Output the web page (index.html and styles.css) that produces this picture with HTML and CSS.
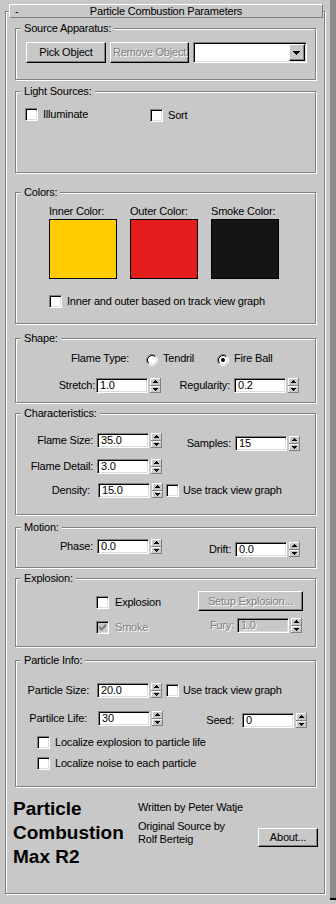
FILE: index.html
```html
<!DOCTYPE html>
<html>
<head>
<meta charset="utf-8">
<title>Particle Combustion Parameters</title>
<link rel="stylesheet" href="styles.css">
</head>
<body>
<div class="screen">
  <div class="main">
    <div class="titlebar">
      <span class="tb-toggle">-</span>
      <span class="tb-title">Particle Combustion Parameters</span>
      <span></span>
    </div>
    <div class="rollout">

      <section class="group g-source">
        <div class="legend">Source Apparatus:</div>
        <div class="row r-source">
          <div class="btn btn-pick">Pick Object</div>
          <div class="btn btn-remove disabled">Remove Object</div>
          <div class="combo">
            <div class="combo-arrow">
              <svg width="7" height="4" viewBox="0 0 7 4" shape-rendering="crispEdges"><rect x="0" y="0" width="7" height="1"/><rect x="1" y="1" width="5" height="1"/><rect x="2" y="2" width="3" height="1"/><rect x="3" y="3" width="1" height="1"/></svg>
            </div>
          </div>
        </div>
      </section>

      <section class="group g-light">
        <div class="legend">Light Sources:</div>
        <div class="row r-light">
          <label class="check"><span class="box"></span><span>Illuminate</span></label>
          <label class="check check-sort"><span class="box"></span><span>Sort</span></label>
        </div>
      </section>

      <section class="group g-colors">
        <div class="legend">Colors:</div>
        <div class="colors">
          <div class="color-col"><div class="color-name">Inner Color:</div><div class="swatch sw-inner"></div></div>
          <div class="color-col"><div class="color-name">Outer Color:</div><div class="swatch sw-outer"></div></div>
          <div class="color-col"><div class="color-name">Smoke Color:</div><div class="swatch sw-smoke"></div></div>
        </div>
        <div class="row r-colors-check">
          <label class="check"><span class="box"></span><span>Inner and outer based on track view graph</span></label>
        </div>
      </section>

      <section class="group g-shape">
        <div class="legend">Shape:</div>
        <div class="row r-flame">
          <span class="flame-label">Flame Type:</span>
          <label class="radio-item">
            <svg class="radio" width="12" height="12" viewBox="0 0 12 12"><circle cx="6" cy="6" r="4.5" fill="#fff"/><path d="M2.11 9.89A5.5 5.5 0 0 1 9.89 2.11" fill="none" stroke="#808080"/><path d="M9.89 2.11A5.5 5.5 0 0 1 2.11 9.89" fill="none" stroke="#fff"/><path d="M2.82 9.18A4.5 4.5 0 0 1 9.18 2.82" fill="none" stroke="#000"/><path d="M9.18 2.82A4.5 4.5 0 0 1 2.82 9.18" fill="none" stroke="#dcdcdc"/></svg>
            <span>Tendril</span>
          </label>
          <label class="radio-item">
            <svg class="radio" width="12" height="12" viewBox="0 0 12 12"><circle cx="6" cy="6" r="4.5" fill="#fff"/><path d="M2.11 9.89A5.5 5.5 0 0 1 9.89 2.11" fill="none" stroke="#808080"/><path d="M9.89 2.11A5.5 5.5 0 0 1 2.11 9.89" fill="none" stroke="#fff"/><path d="M2.82 9.18A4.5 4.5 0 0 1 9.18 2.82" fill="none" stroke="#000"/><path d="M9.18 2.82A4.5 4.5 0 0 1 2.82 9.18" fill="none" stroke="#dcdcdc"/><circle cx="6" cy="6" r="2" fill="#000"/></svg>
            <span>Fire Ball</span>
          </label>
        </div>
        <div class="row r-stretch">
          <div class="field">
            <span class="lbl lbl-l lbl-stretch">Stretch:</span>
            <span class="edit">1.0</span>
            <svg class="spin" width="11" height="15" viewBox="0 0 11 15" shape-rendering="crispEdges"><rect width="11" height="15" fill="#808080"/><rect width="10" height="7" fill="#fff"/><rect x="1" y="1" width="9" height="6" fill="#c8c8c8"/><rect y="8" width="10" height="6" fill="#fff"/><rect x="1" y="9" width="9" height="5" fill="#c8c8c8"/><rect x="5" y="2" width="1" height="1"/><rect x="4" y="3" width="3" height="1"/><rect x="3" y="4" width="5" height="1"/><rect x="3" y="10" width="5" height="1"/><rect x="4" y="11" width="3" height="1"/><rect x="5" y="12" width="1" height="1"/></svg>
          </div>
          <div class="field">
            <span class="lbl lbl-r">Regularity:</span>
            <span class="edit">0.2</span>
            <svg class="spin" width="11" height="15" viewBox="0 0 11 15" shape-rendering="crispEdges"><rect width="11" height="15" fill="#808080"/><rect width="10" height="7" fill="#fff"/><rect x="1" y="1" width="9" height="6" fill="#c8c8c8"/><rect y="8" width="10" height="6" fill="#fff"/><rect x="1" y="9" width="9" height="5" fill="#c8c8c8"/><rect x="5" y="2" width="1" height="1"/><rect x="4" y="3" width="3" height="1"/><rect x="3" y="4" width="5" height="1"/><rect x="3" y="10" width="5" height="1"/><rect x="4" y="11" width="3" height="1"/><rect x="5" y="12" width="1" height="1"/></svg>
          </div>
        </div>
      </section>

      <section class="group g-char">
        <div class="legend">Characteristics:</div>
        <div class="row r-char1">
          <div class="field">
            <span class="lbl lbl-l">Flame Size:</span>
            <span class="edit">35.0</span>
            <svg class="spin" width="11" height="15" viewBox="0 0 11 15" shape-rendering="crispEdges"><rect width="11" height="15" fill="#808080"/><rect width="10" height="7" fill="#fff"/><rect x="1" y="1" width="9" height="6" fill="#c8c8c8"/><rect y="8" width="10" height="6" fill="#fff"/><rect x="1" y="9" width="9" height="5" fill="#c8c8c8"/><rect x="5" y="2" width="1" height="1"/><rect x="4" y="3" width="3" height="1"/><rect x="3" y="4" width="5" height="1"/><rect x="3" y="10" width="5" height="1"/><rect x="4" y="11" width="3" height="1"/><rect x="5" y="12" width="1" height="1"/></svg>
          </div>
          <div class="field drop3">
            <span class="lbl lbl-r">Samples:</span>
            <span class="edit">15</span>
            <svg class="spin" width="11" height="15" viewBox="0 0 11 15" shape-rendering="crispEdges"><rect width="11" height="15" fill="#808080"/><rect width="10" height="7" fill="#fff"/><rect x="1" y="1" width="9" height="6" fill="#c8c8c8"/><rect y="8" width="10" height="6" fill="#fff"/><rect x="1" y="9" width="9" height="5" fill="#c8c8c8"/><rect x="5" y="2" width="1" height="1"/><rect x="4" y="3" width="3" height="1"/><rect x="3" y="4" width="5" height="1"/><rect x="3" y="10" width="5" height="1"/><rect x="4" y="11" width="3" height="1"/><rect x="5" y="12" width="1" height="1"/></svg>
          </div>
        </div>
        <div class="row r-char2">
          <div class="field">
            <span class="lbl lbl-l">Flame Detail:</span>
            <span class="edit">3.0</span>
            <svg class="spin" width="11" height="15" viewBox="0 0 11 15" shape-rendering="crispEdges"><rect width="11" height="15" fill="#808080"/><rect width="10" height="7" fill="#fff"/><rect x="1" y="1" width="9" height="6" fill="#c8c8c8"/><rect y="8" width="10" height="6" fill="#fff"/><rect x="1" y="9" width="9" height="5" fill="#c8c8c8"/><rect x="5" y="2" width="1" height="1"/><rect x="4" y="3" width="3" height="1"/><rect x="3" y="4" width="5" height="1"/><rect x="3" y="10" width="5" height="1"/><rect x="4" y="11" width="3" height="1"/><rect x="5" y="12" width="1" height="1"/></svg>
          </div>
        </div>
        <div class="row r-char3">
          <div class="field">
            <span class="lbl lbl-density">Density:</span>
            <span class="edit">15.0</span>
            <svg class="spin" width="11" height="15" viewBox="0 0 11 15" shape-rendering="crispEdges"><rect width="11" height="15" fill="#808080"/><rect width="10" height="7" fill="#fff"/><rect x="1" y="1" width="9" height="6" fill="#c8c8c8"/><rect y="8" width="10" height="6" fill="#fff"/><rect x="1" y="9" width="9" height="5" fill="#c8c8c8"/><rect x="5" y="2" width="1" height="1"/><rect x="4" y="3" width="3" height="1"/><rect x="3" y="4" width="5" height="1"/><rect x="3" y="10" width="5" height="1"/><rect x="4" y="11" width="3" height="1"/><rect x="5" y="12" width="1" height="1"/></svg>
          </div>
          <label class="check check-track check-track-3"><span class="box"></span><span>Use track view graph</span></label>
        </div>
      </section>

      <section class="group g-motion">
        <div class="legend">Motion:</div>
        <div class="row r-motion">
          <div class="field">
            <span class="lbl lbl-l">Phase:</span>
            <span class="edit">0.0</span>
            <svg class="spin" width="11" height="15" viewBox="0 0 11 15" shape-rendering="crispEdges"><rect width="11" height="15" fill="#808080"/><rect width="10" height="7" fill="#fff"/><rect x="1" y="1" width="9" height="6" fill="#c8c8c8"/><rect y="8" width="10" height="6" fill="#fff"/><rect x="1" y="9" width="9" height="5" fill="#c8c8c8"/><rect x="5" y="2" width="1" height="1"/><rect x="4" y="3" width="3" height="1"/><rect x="3" y="4" width="5" height="1"/><rect x="3" y="10" width="5" height="1"/><rect x="4" y="11" width="3" height="1"/><rect x="5" y="12" width="1" height="1"/></svg>
          </div>
          <div class="field drop3">
            <span class="lbl lbl-r">Drift:</span>
            <span class="edit">0.0</span>
            <svg class="spin" width="11" height="15" viewBox="0 0 11 15" shape-rendering="crispEdges"><rect width="11" height="15" fill="#808080"/><rect width="10" height="7" fill="#fff"/><rect x="1" y="1" width="9" height="6" fill="#c8c8c8"/><rect y="8" width="10" height="6" fill="#fff"/><rect x="1" y="9" width="9" height="5" fill="#c8c8c8"/><rect x="5" y="2" width="1" height="1"/><rect x="4" y="3" width="3" height="1"/><rect x="3" y="4" width="5" height="1"/><rect x="3" y="10" width="5" height="1"/><rect x="4" y="11" width="3" height="1"/><rect x="5" y="12" width="1" height="1"/></svg>
          </div>
        </div>
      </section>

      <section class="group g-explosion">
        <div class="legend">Explosion:</div>
        <div class="row r-exp1">
          <label class="check check-exp"><span class="box"></span><span>Explosion</span></label>
          <div class="btn btn-setup disabled">Setup Explosion...</div>
        </div>
        <div class="row r-exp2">
          <label class="check check-smoke"><span class="box box-disabled"><svg width="9" height="9" viewBox="0 0 9 9" shape-rendering="crispEdges" fill="#808080"><rect x="7" y="1" width="1" height="1"/><rect x="6" y="2" width="2" height="1"/><rect x="1" y="3" width="1" height="1"/><rect x="5" y="3" width="3" height="1"/><rect x="1" y="4" width="2" height="1"/><rect x="4" y="4" width="3" height="1"/><rect x="1" y="5" width="5" height="1"/><rect x="2" y="6" width="3" height="1"/><rect x="3" y="7" width="1" height="1"/></svg></span><span class="disabled">Smoke</span></label>
          <div class="field">
            <span class="lbl lbl-fury disabled">Fury:</span>
            <span class="edit edit-disabled disabled">1.0</span>
            <svg class="spin" width="11" height="15" viewBox="0 0 11 15" shape-rendering="crispEdges"><rect width="11" height="15" fill="#808080"/><rect width="10" height="7" fill="#fff"/><rect x="1" y="1" width="9" height="6" fill="#c8c8c8"/><rect y="8" width="10" height="6" fill="#fff"/><rect x="1" y="9" width="9" height="5" fill="#c8c8c8"/><rect x="5" y="2" width="1" height="1"/><rect x="4" y="3" width="3" height="1"/><rect x="3" y="4" width="5" height="1"/><rect x="3" y="10" width="5" height="1"/><rect x="4" y="11" width="3" height="1"/><rect x="5" y="12" width="1" height="1"/></svg>
          </div>
        </div>
      </section>

      <section class="group g-particle">
        <div class="legend">Particle Info:</div>
        <div class="row r-part1">
          <div class="field">
            <span class="lbl lbl-psize">Particle Size:</span>
            <span class="edit">20.0</span>
            <svg class="spin" width="11" height="15" viewBox="0 0 11 15" shape-rendering="crispEdges"><rect width="11" height="15" fill="#808080"/><rect width="10" height="7" fill="#fff"/><rect x="1" y="1" width="9" height="6" fill="#c8c8c8"/><rect y="8" width="10" height="6" fill="#fff"/><rect x="1" y="9" width="9" height="5" fill="#c8c8c8"/><rect x="5" y="2" width="1" height="1"/><rect x="4" y="3" width="3" height="1"/><rect x="3" y="4" width="5" height="1"/><rect x="3" y="10" width="5" height="1"/><rect x="4" y="11" width="3" height="1"/><rect x="5" y="12" width="1" height="1"/></svg>
          </div>
          <label class="check check-track check-track-p"><span class="box"></span><span>Use track view graph</span></label>
        </div>
        <div class="row r-part2">
          <div class="field">
            <span class="lbl lbl-plife">Partilce Life:</span>
            <span class="edit">30</span>
            <svg class="spin" width="11" height="15" viewBox="0 0 11 15" shape-rendering="crispEdges"><rect width="11" height="15" fill="#808080"/><rect width="10" height="7" fill="#fff"/><rect x="1" y="1" width="9" height="6" fill="#c8c8c8"/><rect y="8" width="10" height="6" fill="#fff"/><rect x="1" y="9" width="9" height="5" fill="#c8c8c8"/><rect x="5" y="2" width="1" height="1"/><rect x="4" y="3" width="3" height="1"/><rect x="3" y="4" width="5" height="1"/><rect x="3" y="10" width="5" height="1"/><rect x="4" y="11" width="3" height="1"/><rect x="5" y="12" width="1" height="1"/></svg>
          </div>
          <div class="field drop2">
            <span class="lbl lbl-seed">Seed:</span>
            <span class="edit">0</span>
            <svg class="spin" width="11" height="15" viewBox="0 0 11 15" shape-rendering="crispEdges"><rect width="11" height="15" fill="#808080"/><rect width="10" height="7" fill="#fff"/><rect x="1" y="1" width="9" height="6" fill="#c8c8c8"/><rect y="8" width="10" height="6" fill="#fff"/><rect x="1" y="9" width="9" height="5" fill="#c8c8c8"/><rect x="5" y="2" width="1" height="1"/><rect x="4" y="3" width="3" height="1"/><rect x="3" y="4" width="5" height="1"/><rect x="3" y="10" width="5" height="1"/><rect x="4" y="11" width="3" height="1"/><rect x="5" y="12" width="1" height="1"/></svg>
          </div>
        </div>
        <div class="row r-local">
          <label class="check"><span class="box"></span><span>Localize explosion to particle life</span></label>
        </div>
        <div class="row r-local">
          <label class="check"><span class="box"></span><span>Localize noise to each particle</span></label>
        </div>
      </section>

      <div class="credits">
        <div class="credits-title">Particle<br>Combustion<br>Max R2</div>
        <div class="credits-text">
          <div>Written by Peter Watje</div>
          <div class="credits-orig">Original Source by<br>Rolf Berteig</div>
        </div>
        <div class="btn btn-about">About...</div>
      </div>

    </div>
  </div>
  <div class="band"></div>
</div>
</body>
</html>
```

FILE: styles.css
```css
* { box-sizing: border-box; }

html, body {
  margin: 0;
  padding: 0;
  background: #c8c8c8;
}

body {
  font-family: "Liberation Sans", Arial, sans-serif;
  font-size: 11px;
  line-height: 13px;
  letter-spacing: -0.2px;
  color: #000;
}

.screen {
  display: flex;
  width: 336px;
  height: 904px;
  overflow: hidden;
}

.main {
  width: 330px;
  padding-top: 4px;
}

.band {
  width: 6px;
  height: 900px;
  background: #8c8c8c;
  border-bottom: 2px solid #000;
}

/* rollout title */
.titlebar {
  position: relative;
  z-index: 1;
  margin-left: 9px;
  width: 314px;
  height: 14px;
  border: 1px solid;
  border-color: #fff #808080 #808080 #fff;
  background: #c8c8c8;
  display: grid;
  grid-template-columns: 1fr auto 1fr;
  line-height: 12px;
  white-space: nowrap;
}

.tb-toggle { padding-left: 5px; }

/* rollout frame */
.rollout {
  margin: -7px 0 0 5px;
  width: 320px;
  height: 883px;
  border: 1px solid #808080;
  box-shadow: inset 1px 1px 0 #fff, 1px 1px 0 #fff;
}

/* etched group boxes */
.group {
  margin-left: 9px;
  width: 301px;
  border: 1px solid #808080;
  box-shadow: inset 1px 1px 0 #fff, 1px 1px 0 #fff;
}

.legend {
  width: fit-content;
  margin: -7px 0 0 5px;
  padding: 0 3px;
  background: #c8c8c8;
  line-height: 13px;
  white-space: nowrap;
}

.g-source    { margin-top: 16px; height: 52px; }
.g-light     { margin-top: 11px; height: 82px; }
.g-colors    { margin-top: 19px; height: 132px; }
.g-shape     { margin-top: 14px; height: 65px; }
.g-char      { margin-top: 10px; height: 102px; }
.g-motion    { margin-top: 12px; height: 41px; }
.g-explosion { margin-top: 10px; height: 69px; }
.g-particle  { margin-top: 13px; height: 127px; }

.row {
  display: flex;
  align-items: flex-start;
  white-space: nowrap;
}

/* buttons */
.btn {
  display: flex;
  align-items: center;
  justify-content: center;
  height: 21px;
  border: 1px solid;
  border-color: #fff #000 #000 #fff;
  box-shadow: inset -1px -1px 0 #808080;
  background: #c8c8c8;
  white-space: nowrap;
  flex: none;
}

.disabled {
  color: #808080;
  text-shadow: 1px 1px 0 #fff;
}

.r-source { margin-top: 7px; padding-left: 10px; gap: 4px; }
.btn-pick { width: 80px; }
.btn-remove { width: 79px; }

.combo {
  width: 114px;
  height: 21px;
  padding: 1px;
  border: 1px solid;
  border-color: #808080 #fff #fff #808080;
  box-shadow: inset 1px 1px 0 #000, inset -1px -1px 0 #dcdcdc;
  background: #fff;
  display: flex;
  justify-content: flex-end;
}

.combo-arrow {
  width: 16px;
  height: 17px;
  border: 1px solid;
  border-color: #fff #000 #000 #fff;
  box-shadow: inset -1px -1px 0 #808080;
  background: #c8c8c8;
  display: flex;
  align-items: center;
  justify-content: center;
}

.combo-arrow svg { display: block; margin: 1px 1px 0 0; }

/* checkboxes */
.check {
  display: flex;
  align-items: flex-start;
  gap: 5px;
  white-space: nowrap;
}

.box {
  width: 13px;
  height: 13px;
  flex: none;
  border: 1px solid;
  border-color: #808080 #fff #fff #808080;
  box-shadow: inset 1px 1px 0 #000, inset -1px -1px 0 #dcdcdc;
  background: #fff;
  padding: 1px;
}

.box svg { display: block; }

.box-disabled { background: #c8c8c8; }

.r-light {
  margin-top: 10px;
  padding-left: 9px;
  display: grid;
  grid-template-columns: 125px auto;
}

.check-sort { margin-top: 1px; }

/* colors */
.colors {
  margin-top: 6px;
  padding-left: 33px;
  display: grid;
  grid-template-columns: repeat(3, 68px);
  column-gap: 13px;
}

.color-name { white-space: nowrap; line-height: 13px; }

.swatch {
  margin-top: 1px;
  height: 60px;
  border: 1px solid #000;
}

.sw-inner { background: #ffcc00; }
.sw-outer { background: #e31c1c; }
.sw-smoke { background: #151515; }

.r-colors-check { margin-top: 16px; padding-left: 33px; }

/* shape */
.r-flame {
  margin-top: 7px;
  padding-left: 55px;
  display: grid;
  grid-template-columns: 75px 71px auto;
}

.radio-item {
  display: flex;
  align-items: flex-start;
  gap: 5px;
}

.radio { display: block; margin-top: 2px; flex: none; }

.r-stretch { margin-top: 12px; }

/* spinner fields */
.field {
  display: flex;
  align-items: flex-start;
  flex: none;
}

.drop3 { margin-top: 3px; }
.drop2 { margin-top: 2px; }

.lbl {
  display: block;
  flex: none;
  line-height: 15px;
  text-align: right;
  padding-right: 4px;
  white-space: nowrap;
}

.lbl-l { width: 81px; }
.lbl-r { width: 73px; }
.lbl-stretch { width: 80px; padding-right: 1px; }
.lbl-density { width: 82px; padding-right: 8px; }
.lbl-psize { width: 81px; padding-right: 8px; }
.lbl-plife { width: 82px; padding-right: 11px; }
.lbl-seed { width: 79px; padding-right: 8px; }
.lbl-fury { width: 39px; padding-right: 3px; }

.edit {
  display: block;
  width: 52px;
  height: 15px;
  flex: none;
  border: 1px solid;
  border-color: #808080 #fff #fff #808080;
  box-shadow: inset 1px 1px 0 #000, inset -1px -1px 0 #dcdcdc;
  background: #fff;
  padding-left: 3px;
  line-height: 13px;
}

.edit-disabled { background: #c8c8c8; }

.spin { display: block; flex: none; margin-left: 2px; }

.r-char1 { margin-top: 13px; }
.r-char2 { margin-top: 8px; }
.r-char3 { margin-top: 9px; }

.check-track { gap: 4px; line-height: 15px; }
.check-track .box { margin-top: 1px; }
.check-track-3 { margin-left: 3px; }
.check-track-p { margin-left: 4px; }

.r-motion { margin-top: 5px; }

/* explosion */
.r-exp1 {
  margin-top: 6px;
  padding-left: 80px;
  display: grid;
  grid-template-columns: 102px 105px;
}

.check-exp { margin-top: 5px; gap: 6px; }
.btn-setup { height: 20px; }

.r-exp2 {
  margin-top: 7px;
  padding-left: 80px;
  display: grid;
  grid-template-columns: 102px auto;
}

.check-smoke { margin-top: 3px; gap: 6px; }

/* particle info */
.r-part1 { margin-top: 16px; }
.r-part2 { margin-top: 13px; }
.r-local { margin-top: 8px; padding-left: 21px; }

/* credits */
.credits {
  margin-top: 10px;
  padding-left: 7px;
  display: flex;
  align-items: flex-start;
}

.credits-title {
  width: 125px;
  flex: none;
  font-size: 19px;
  font-weight: bold;
  line-height: 24px;
  letter-spacing: 0;
  white-space: nowrap;
}

.credits-text {
  width: 120px;
  flex: none;
  margin-top: 4px;
  white-space: nowrap;
}

.credits-orig { margin-top: 6px; }

.btn-about {
  width: 60px;
  height: 19px;
  margin-top: 31px;
}
```
